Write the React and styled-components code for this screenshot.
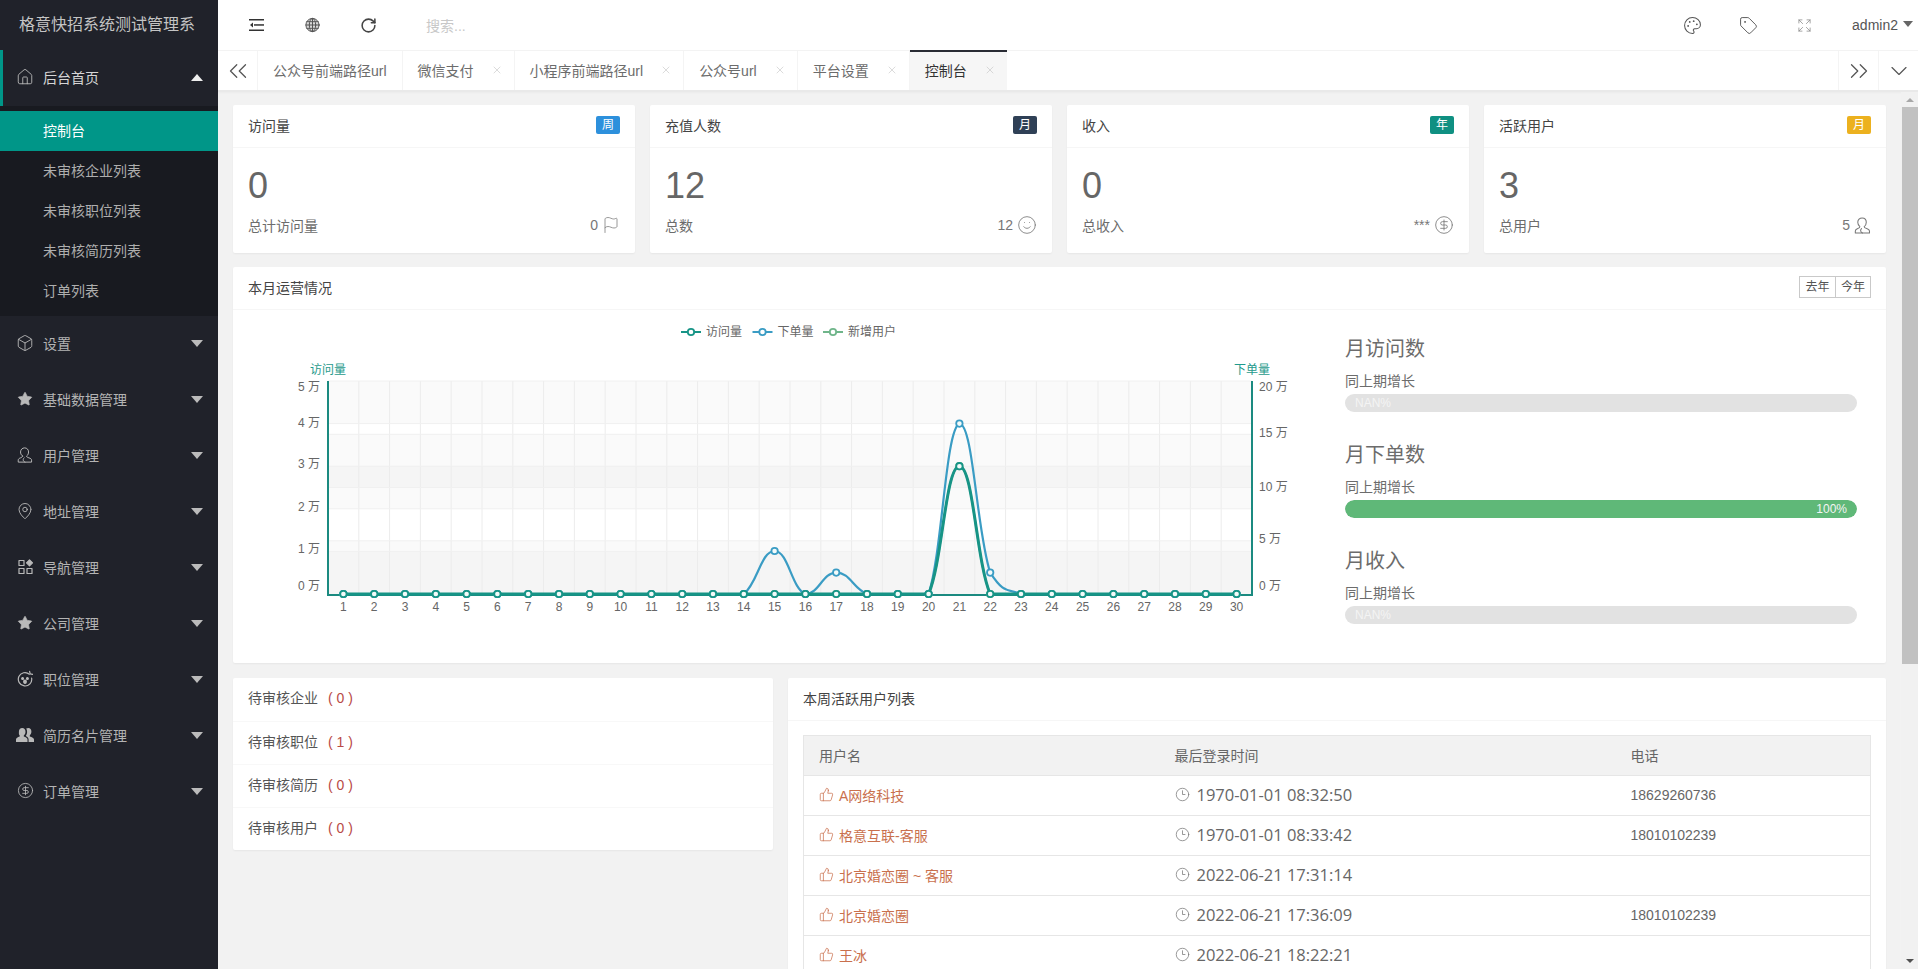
import React from 'react'
import styled, { createGlobalStyle } from 'styled-components'
import {
  Box, ChevronDown, ChevronsLeft, ChevronsRight, CircleDollarSign, Clock3, Expand, Flag, House,
  MapPin, Palette, RotateCw, Smile, Star, Tag, ThumbsUp, X,
} from 'lucide-react'

const GlobalStyle = createGlobalStyle`
  html, body { margin: 0; height: 100%; overflow: hidden; }
  body {
    font-family: "Liberation Sans", "Noto Sans CJK SC", sans-serif;
    font-size: 14px;
    color: #666;
    background: #f2f2f2;
  }
  * { box-sizing: border-box; }
`

const Page = styled.div`
  display: flex;
  height: 969px;
`

/* sidebar */
const Side = styled.aside`
  width: 218px;
  flex: none;
  background: #20222a;
  color: #bdbdbd;
`
const Logo = styled.div`
  height: 50px;
  line-height: 49px;
  padding-left: 19px;
  font-size: 16px;
  color: #c4c4c4;
  white-space: nowrap;
`
const NavItem = styled.div`
  position: relative;
  display: flex;
  align-items: center;
  height: 56px;
  padding: 0 0 3px 16px;
  color: ${p => (p.$open ? '#d6d6d6' : '#b4b4b4')};
  box-shadow: ${p => (p.$open ? 'inset 3px 0 0 #009688' : 'none')};
  svg { flex: none; }
`
const NavIcon = styled.span`
  display: flex;
  justify-content: center;
  width: 18px;
  margin-right: 9px;
  color: #b9b9b9;
`
const Caret = styled.i`
  position: absolute;
  right: 15px;
  top: 24px;
  width: 0;
  height: 0;
  border-left: 6px solid transparent;
  border-right: 6px solid transparent;
  border-top: ${p => (p.$up ? '0' : '7px solid #bbb')};
  border-bottom: ${p => (p.$up ? '7px solid #eee' : '0')};
`
const SubNav = styled.div`
  padding: 5px 0;
  background: #181a20;
`
const SubItem = styled.div`
  height: 40px;
  line-height: 40px;
  padding-left: 43px;
  color: ${p => (p.$active ? '#fff' : '#aeaeae')};
  background: ${p => (p.$active ? '#009688' : 'transparent')};
`

/* top bars */
const Main = styled.div`
  flex: 1;
  min-width: 0;
  display: flex;
  flex-direction: column;
`
const Header = styled.header`
  display: flex;
  align-items: center;
  height: 50px;
  flex: none;
  background: #fff;
  padding: 0 0 0 10px;
`
const ToolIcon = styled.span`
  display: flex;
  justify-content: center;
  width: 56px;
  color: ${p => p.$color || '#333'};
`
const Search = styled.span`
  margin-left: 30px;
  color: #c8c8c8;
`
const HeaderRight = styled.div`
  display: flex;
  align-items: center;
  margin-left: auto;
  padding-right: 5px;
`
const UserName = styled.span`
  margin-left: 20px;
  color: #555;
`
const UserCaret = styled.i`
  display: inline-block;
  margin-left: 5px;
  margin-bottom: 3px;
  width: 0;
  height: 0;
  border-left: 5px solid transparent;
  border-right: 5px solid transparent;
  border-top: 6px solid #666;
`
const TabBar = styled.nav`
  display: flex;
  height: 42px;
  flex: none;
  background: #fff;
  border-top: 1px solid #f3f3f3;
  border-bottom: 2px solid #e9e9e9;
  box-shadow: 0 1px 2px rgba(0, 0, 0, 0.03);
`
const TabArrow = styled.span`
  display: flex;
  align-items: center;
  justify-content: center;
  width: 40px;
  flex: none;
  color: #555;
  border-left: ${p => (p.$bordered ? '1px solid #f4f4f4' : '0')};
  border-right: ${p => (p.$left ? '1px solid #f4f4f4' : '0')};
`
const Tabs = styled.div`
  display: flex;
  flex: 1;
  min-width: 0;
`
const Tab = styled.div`
  position: relative;
  display: flex;
  align-items: center;
  padding: 0 ${p => (p.$noClose ? '15px' : '40px')} 2px 15px;
  color: ${p => (p.$active ? '#333' : '#6c6c6c')};
  background: ${p => (p.$active ? '#f6f6f6' : '#fff')};
  border-right: ${p => (p.$active ? '0' : '1px solid #f4f4f4')};
  white-space: nowrap;
  &::before {
    content: '';
    display: ${p => (p.$active ? 'block' : 'none')};
    position: absolute;
    left: 0;
    right: 0;
    top: -1px;
    height: 2px;
    background: #292b34;
  }
`
const TabClose = styled(X)`
  position: absolute;
  right: 11px;
  top: 13px;
  color: #c2c2c2;
`

/* content + its scrollbar */
const Workspace = styled.div`
  flex: 1;
  min-height: 0;
  display: flex;
`
const Scroller = styled.main`
  flex: 1;
  min-width: 0;
  overflow: hidden;
`
const ScrollRail = styled.div`
  width: 17px;
  flex: none;
  display: flex;
  flex-direction: column;
  padding-left: 1px;
  background: #f1f1f1;
`
const ScrollBtn = styled.div`
  height: ${p => p.$h}px;
  flex: none;
  display: flex;
  align-items: center;
  justify-content: center;
  &::after {
    content: '';
    width: 0;
    height: 0;
    border-left: 4px solid transparent;
    border-right: 4px solid transparent;
    border-top: ${p => (p.$down ? '4px solid #505050' : '0')};
    border-bottom: ${p => (p.$down ? '0' : '4px solid #a8a8a8')};
  }
`
const ScrollThumb = styled.div`
  height: 557px;
  flex: none;
  background: #c1c1c1;
`
const ScrollGap = styled.div`
  flex: 1;
`
const Content = styled.div`
  display: flex;
  flex-direction: column;
  gap: 14px;
  padding: 13px 15px 15px;
`
const StatGrid = styled.div`
  display: grid;
  grid-template-columns: repeat(4, 1fr);
  gap: 15px;
`
const Card = styled.section`
  background: #fff;
  border-radius: 2px;
  box-shadow: 0 1px 2px rgba(0, 0, 0, 0.05);
`
const CardHead = styled.div`
  display: flex;
  align-items: center;
  justify-content: space-between;
  height: 43px;
  padding: 0 15px 3px;
  color: #444;
  border-bottom: 1px solid #f6f6f6;
`
const Badge = styled.span`
  width: 24px;
  height: 18px;
  line-height: 18px;
  text-align: center;
  font-size: 12px;
  color: #fff;
  border-radius: 2px;
  background: ${p => p.$bg};
`
const StatBody = styled.div`
  padding: 11px 15px 0;
  height: 105px;
`
const BigNum = styled.p`
  margin: 0;
  height: 50px;
  line-height: 54px;
  font-size: 36px;
  color: #666;
`
const StatFoot = styled.div`
  display: flex;
  align-items: center;
  justify-content: space-between;
  margin-top: 6px;
  color: #6c6c6c;
`
const StatRight = styled.span`
  display: flex;
  align-items: center;
  gap: 4px;
  color: #777;
  svg { color: #777; }
`
const BtnGroup = styled.div`
  display: flex;
  border: 1px solid #c9c9c9;
  height: 22px;
`
const Btn = styled.span`
  width: 35px;
  line-height: 20px;
  text-align: center;
  font-size: 12px;
  color: #555;
  & + & { border-left: 1px solid #c9c9c9; }
`
const ChartBody = styled.div`
  display: flex;
  height: 353px;
`
const ChartWrap = styled.div`
  width: 1112px;
  flex: none;
  padding-top: 1px;
  svg { display: block; }
`
const Meters = styled.div`
  width: 512px;
  padding-top: 20px;
`
const Meter = styled.div`
  height: 106px;
`
const MeterTitle = styled.h3`
  margin: 0;
  height: 34px;
  line-height: 39px;
  font-size: 20px;
  font-weight: 400;
  color: #6c6c6c;
`
const MeterLabel = styled.div`
  height: 30px;
  line-height: 34px;
  color: #6c6c6c;
`
const Bar = styled.div`
  position: relative;
  height: 18px;
  border-radius: 20px;
  background: #e2e2e2;
  overflow: hidden;
`
const BarFill = styled.div`
  height: 100%;
  border-radius: 20px;
  background: #5fb878;
`
const BarText = styled.span`
  position: absolute;
  top: 0;
  line-height: 18px;
  font-size: 12px;
  color: #f4f4f4;
  left: ${p => (p.$right ? 'auto' : '10px')};
  right: ${p => (p.$right ? '10px' : 'auto')};
`
const BottomRow = styled.div`
  display: grid;
  grid-template-columns: 540px 1fr;
  gap: 15px;
  align-items: start;
  margin-top: 1px;
`
const TodoRow = styled.div`
  height: 43px;
  line-height: 41px;
  padding-left: 15px;
  color: #555;
  & + & { border-top: 1px solid #f8f8f8; }
`
const TodoCount = styled.span`
  margin-left: 10px;
  color: #b84a46;
`
const TableWrap = styled.div`
  padding: 14px 15px 15px;
`
const Table = styled.table`
  width: 100%;
  table-layout: fixed;
  border-collapse: collapse;
  color: #666;
  th, td {
    height: 40px;
    padding: 0 15px 2px;
    text-align: left;
    font-weight: 400;
    border: 1px solid #e6e6e6;
    border-left: 0;
    border-right: 0;
  }
  th { background: #f2f2f2; }
  tr > :first-child { border-left: 1px solid #e6e6e6; }
  tr > :last-child { border-right: 1px solid #e6e6e6; }
`
const UserLink = styled.span`
  display: flex;
  align-items: center;
  gap: 5px;
  color: #c9704d;
`
const LoginTime = styled.span`
  display: flex;
  align-items: center;
  gap: 7px;
  font-family: "Open Sans", sans-serif;
  font-size: 16.5px;
  color: #666;
  svg { color: #777; }
`

const stroke = { fill: 'none', stroke: 'currentColor', strokeLinecap: 'round', strokeLinejoin: 'round' }

const FoldIcon = () => (
  <svg width="15" height="12" viewBox="0 0 15 12" fill="#333">
    <rect x="0" y="0" width="15" height="1.5" />
    <rect x="5" y="5.2" width="10" height="1.5" />
    <rect x="0" y="10.5" width="15" height="1.5" />
    <path d="M4 3.5v5L1 6z" />
  </svg>
)

const GlobeIcon = () => (
  <svg width="15" height="16" viewBox="0 0 15 16" {...stroke} strokeWidth="1" color="#555">
    <circle cx="7.5" cy="8" r="6.6" fill="#d8d8d8" />
    <ellipse cx="7.5" cy="8" rx="3.2" ry="6.6" />
    <path d="M7.5 1.4v13.2M1.8 4.7h11.4M.9 8h13.2M1.8 11.3h11.4" />
  </svg>
)

const UserIcon = ({ size = 18 }) => (
  <svg width={size} height={size} viewBox="0 0 18 18" {...stroke} strokeWidth="1.1">
    <path d="M6.2 10.2C4.6 9 4 7.4 4 5.6 4 3 6 1 8.6 1s4.4 2 4.4 4.6c0 1.8-.7 3.5-2.2 4.6 0 1 .9 1.5 2.6 2 1.9.6 3 1.3 3 2.6V17H1.4v-2.2c0-1.3 1-2 2.6-2.6 1.4-.5 2.2-1 2.2-2z" />
    <path d="M9 17c-1.4-.6-2-1.5-2-2.6 0-.9.3-1.6 1-2.2" />
  </svg>
)

const AppsIcon = () => (
  <svg width="15" height="16" viewBox="0 0 15 16" {...stroke} strokeWidth="1.2">
    <rect x="1" y="1.5" width="5" height="5" />
    <rect x="1" y="9.5" width="5" height="5" />
    <rect x="9" y="9.5" width="5" height="5" />
    <path d="M11.5.8l3 3-3 3-3-3z" fill="currentColor" />
  </svg>
)

const FaceIcon = () => (
  <svg width="16" height="17" viewBox="0 0 16 17" {...stroke} strokeWidth="1.2">
    <path d="M12.4 4.2A6.7 6.7 0 1 0 14.6 8" />
    <path d="M12.6 1.3l.6 2.6 2.4.4" />
    <circle cx="5.6" cy="8.5" r=".9" fill="currentColor" />
    <circle cx="10.4" cy="8.5" r=".9" fill="currentColor" />
    <ellipse cx="8" cy="11.8" rx="1.3" ry="1.7" fill="currentColor" />
  </svg>
)

const PeopleIcon = () => (
  <svg width="18" height="14" viewBox="0 0 18 14" fill="currentColor">
    <path d="M6.2 0c2 0 3.3 1.6 3.3 3.7 0 1.6-.7 3-1.7 3.8v1.1c2 .7 3.7 1.6 3.7 3V14H0v-2.4c0-1.4 1.7-2.3 3.7-3V7.5C2.7 6.7 2.9 5.3 2.9 3.7 2.9 1.6 4.2 0 6.2 0z" />
    <path d="M12.4 0c1.8 0 3 1.5 3 3.5 0 1.6-.6 3-1.6 3.8v1.2c2.2.7 4.2 1.7 4.2 3.1V14h-5.4v-2.6c0-1.5-1-2.5-2.8-3.5.8-1 1.300-2.500 1.300-4.200 0-1.300-.3-2.400-.9-3.200.6-.3 1.400-.5 2.200-.5z" />
  </svg>
)

const navItems = [
  { label: '设置', icon: <Box size={18} strokeWidth={1.2} /> },
  { label: '基础数据管理', icon: <Star size={16} fill="currentColor" strokeWidth={1} /> },
  { label: '用户管理', icon: <UserIcon size={16} /> },
  { label: '地址管理', icon: <MapPin size={18} strokeWidth={1.2} /> },
  { label: '导航管理', icon: <AppsIcon /> },
  { label: '公司管理', icon: <Star size={16} fill="currentColor" strokeWidth={1} /> },
  { label: '职位管理', icon: <FaceIcon /> },
  { label: '简历名片管理', icon: <PeopleIcon /> },
  { label: '订单管理', icon: <CircleDollarSign size={17} strokeWidth={1.2} /> },
]

const stats = [
  { title: '访问量', tag: '周', bg: '#2d90dc', num: '0', foot: '总计访问量', value: '0', icon: <Flag size={18} strokeWidth={1} /> },
  { title: '充值人数', tag: '月', bg: '#2f4056', num: '12', foot: '总数', value: '12', icon: <Smile size={20} strokeWidth={1} /> },
  { title: '收入', tag: '年', bg: '#0f9082', num: '0', foot: '总收入', value: '***', icon: <CircleDollarSign size={20} strokeWidth={1} /> },
  { title: '活跃用户', tag: '月', bg: '#ecb11f', num: '3', foot: '总用户', value: '5', icon: <UserIcon size={17} /> },
]

const users = [
  { name: 'A网络科技', time: '1970-01-01 08:32:50', phone: '18629260736' },
  { name: '格意互联-客服', time: '1970-01-01 08:33:42', phone: '18010102239' },
  { name: '北京婚恋圈 ~ 客服', time: '2022-06-21 17:31:14', phone: '' },
  { name: '北京婚恋圈', time: '2022-06-21 17:36:09', phone: '18010102239' },
  { name: '王冰', time: '2022-06-21 18:22:21', phone: '' },
]

// chart geometry, in the svg's own coordinates
const L = 95
const R = 1019
const T = 70
const B = 283
const step = (R - L) / 30
const xAt = i => L + step * (i + 0.5)
const days = Array.from({ length: 30 }, (_, i) => i)
const visits = days.map(i => (i === 20 ? 127.8 : 0))
const orders = days.map(i => ({ 14: 43, 16: 21.4, 20: 170.4, 21: 21.4 }[i] || 0))

const smooth = vals => {
  let d = `M${xAt(0)} ${B - vals[0]}`
  for (let i = 0; i < vals.length - 1; i++) {
    const p0 = vals[Math.max(i - 1, 0)]
    const p1 = vals[i]
    const p2 = vals[i + 1]
    const p3 = vals[Math.min(i + 2, vals.length - 1)]
    const lo = Math.min(p1, p2)
    const hi = Math.max(p1, p2)
    const c1 = Math.min(hi, Math.max(lo, p1 + (p2 - p0) * 0.25))
    const c2 = Math.min(hi, Math.max(lo, p2 - (p3 - p1) * 0.25))
    d += `C${xAt(i) + step * 0.45} ${B - c1} ${xAt(i + 1) - step * 0.45} ${B - c2} ${xAt(i + 1)} ${B - p2}`
  }
  return d
}

const leftBands = [0, 2, 4].map(k => ({ y: B - 42.6 * (k + 1), h: 42.6 }))
const rightBands = [0, 2].map(k => ({ y: B - 53.25 * (k + 1), h: 53.25 }))
const leftTicks = [['5 万', 76], ['4 万', 112], ['3 万', 153], ['2 万', 196], ['1 万', 238], ['0 万', 275]]
const rightTicks = [['20 万', 76], ['15 万', 122], ['10 万', 176], ['5 万', 228], ['0 万', 275]]
const TEAL = '#179486'
const BLUE = '#3a9cc4'
const GREEN = '#6fb58a'

const Series = ({ vals, color, width = 2 }) => (
  <g>
    <path d={smooth(vals)} fill="none" stroke={color} strokeWidth={width} />
    {vals.map((v, i) => (
      <circle key={i} cx={xAt(i)} cy={B - v} r="3.2" fill="#f4fbfa" stroke={color} strokeWidth="1.8" />
    ))}
  </g>
)

const Legend = ({ x, color, label }) => (
  <g>
    <line x1={x} x2={x + 20} y1="21" y2="21" stroke={color} strokeWidth="2" />
    <circle cx={x + 10} cy="21" r="3.2" fill="#fff" stroke={color} strokeWidth="1.8" />
    <text x={x + 25} y="25" fontSize="12" fill="#666">{label}</text>
  </g>
)

const Chart = () => (
  <svg width="1112" height="352" viewBox="0 0 1112 352" fontFamily='"Liberation Sans", "Noto Sans CJK SC", sans-serif'>
    <Legend x={448} color={TEAL} label="访问量" />
    <Legend x={519.5} color={BLUE} label="下单量" />
    <Legend x={590} color={GREEN} label="新增用户" />
    <text x={L} y="63" fontSize="12" fill="#1f9a8c" textAnchor="middle">访问量</text>
    <text x={R} y="63" fontSize="12" fill="#1f9a8c" textAnchor="middle">下单量</text>
    {leftBands.map(b => <rect key={b.y} x={L} y={b.y} width={R - L} height={b.h} fill="rgba(200,200,200,0.09)" />)}
    {rightBands.map(b => <rect key={b.y} x={L} y={b.y} width={R - L} height={b.h} fill="rgba(200,200,200,0.09)" />)}
    {days.map(i => <line key={i} x1={L + step * (i + 1)} x2={L + step * (i + 1)} y1={T} y2={B} stroke="#ececec" />)}
    {[0, 1, 2, 3, 4].map(k => <line key={k} x1={L} x2={R} y1={B - 42.6 * (k + 1)} y2={B - 42.6 * (k + 1)} stroke="#f0f0f0" />)}
    {[1, 2, 3].map(k => <line key={k} x1={L} x2={R} y1={B - 53.25 * k} y2={B - 53.25 * k} stroke="#f0f0f0" />)}
    {leftTicks.map(([t, y]) => <text key={t} x={L - 8} y={y + 4} fontSize="12" fill="#666" textAnchor="end">{t}</text>)}
    {rightTicks.map(([t, y]) => <text key={t} x={R + 7} y={y + 4} fontSize="12" fill="#666">{t}</text>)}
    <path d={`M${L} ${T}V${B + 1}H${R}V${T}`} fill="none" stroke="#1b8a80" strokeWidth="2" />
    <Series vals={visits} color={GREEN} />
    <Series vals={orders} color={BLUE} width={2.2} />
    <Series vals={visits} color={TEAL} width={3} />
    {days.map(i => <text key={i} x={xAt(i)} y={B + 17} fontSize="12" fill="#666" textAnchor="middle">{i + 1}</text>)}
  </svg>
)

export default function App() {
  return (
    <Page>
      <GlobalStyle />
      <Side>
        <Logo>格意快招系统测试管理系</Logo>
        <NavItem $open>
          <NavIcon><House size={18} strokeWidth={1.2} /></NavIcon>
          后台首页
          <Caret $up />
        </NavItem>
        <SubNav>
          <SubItem $active>控制台</SubItem>
          <SubItem>未审核企业列表</SubItem>
          <SubItem>未审核职位列表</SubItem>
          <SubItem>未审核简历列表</SubItem>
          <SubItem>订单列表</SubItem>
        </SubNav>
        {navItems.map(n => (
          <NavItem key={n.label}>
            <NavIcon>{n.icon}</NavIcon>
            {n.label}
            <Caret />
          </NavItem>
        ))}
      </Side>

      <Main>
        <Header>
          <ToolIcon><FoldIcon /></ToolIcon>
          <ToolIcon><GlobeIcon /></ToolIcon>
          <ToolIcon $color="#444"><RotateCw size={17} strokeWidth={2.2} /></ToolIcon>
          <Search>搜索...</Search>
          <HeaderRight>
            <ToolIcon $color="#555"><Palette size={19} strokeWidth={1.3} /></ToolIcon>
            <ToolIcon $color="#555"><Tag size={19} strokeWidth={1.2} /></ToolIcon>
            <ToolIcon $color="#888"><Expand size={15} strokeWidth={1.2} /></ToolIcon>
            <UserName>admin2</UserName>
            <UserCaret />
          </HeaderRight>
        </Header>
        <TabBar>
          <TabArrow $left><ChevronsLeft size={30} strokeWidth={1} /></TabArrow>
          <Tabs>
            <Tab $noClose>公众号前端路径url</Tab>
            <Tab>微信支付<TabClose size={12} strokeWidth={1.2} /></Tab>
            <Tab>小程序前端路径url<TabClose size={12} strokeWidth={1.2} /></Tab>
            <Tab>公众号url<TabClose size={12} strokeWidth={1.2} /></Tab>
            <Tab>平台设置<TabClose size={12} strokeWidth={1.2} /></Tab>
            <Tab $active>控制台<TabClose size={12} strokeWidth={1.2} /></Tab>
          </Tabs>
          <TabArrow $bordered><ChevronsRight size={30} strokeWidth={1} /></TabArrow>
          <TabArrow $bordered><ChevronDown size={28} strokeWidth={1} /></TabArrow>
        </TabBar>

        <Workspace>
          <Scroller>
            <Content>
              <StatGrid>
                {stats.map(s => (
                  <Card key={s.title}>
                    <CardHead>{s.title}<Badge $bg={s.bg}>{s.tag}</Badge></CardHead>
                    <StatBody>
                      <BigNum>{s.num}</BigNum>
                      <StatFoot>{s.foot}<StatRight>{s.value}{s.icon}</StatRight></StatFoot>
                    </StatBody>
                  </Card>
                ))}
              </StatGrid>

              <Card>
                <CardHead>
                  本月运营情况
                  <BtnGroup><Btn>去年</Btn><Btn>今年</Btn></BtnGroup>
                </CardHead>
                <ChartBody>
                  <ChartWrap><Chart /></ChartWrap>
                  <Meters>
                    <Meter>
                      <MeterTitle>月访问数</MeterTitle>
                      <MeterLabel>同上期增长</MeterLabel>
                      <Bar><BarText>NAN%</BarText></Bar>
                    </Meter>
                    <Meter>
                      <MeterTitle>月下单数</MeterTitle>
                      <MeterLabel>同上期增长</MeterLabel>
                      <Bar><BarFill /><BarText $right>100%</BarText></Bar>
                    </Meter>
                    <Meter>
                      <MeterTitle>月收入</MeterTitle>
                      <MeterLabel>同上期增长</MeterLabel>
                      <Bar><BarText>NAN%</BarText></Bar>
                    </Meter>
                  </Meters>
                </ChartBody>
              </Card>

              <BottomRow>
                <Card>
                  <TodoRow>待审核企业<TodoCount>( 0 )</TodoCount></TodoRow>
                  <TodoRow>待审核职位<TodoCount>( 1 )</TodoCount></TodoRow>
                  <TodoRow>待审核简历<TodoCount>( 0 )</TodoCount></TodoRow>
                  <TodoRow>待审核用户<TodoCount>( 0 )</TodoCount></TodoRow>
                </Card>
                <Card>
                  <CardHead>本周活跃用户列表</CardHead>
                  <TableWrap>
                    <Table>
                      <colgroup>
                        <col width="356" />
                        <col width="456" />
                        <col />
                      </colgroup>
                      <thead>
                        <tr><th>用户名</th><th>最后登录时间</th><th>电话</th></tr>
                      </thead>
                      <tbody>
                        {users.map(u => (
                          <tr key={u.time}>
                            <td><UserLink><ThumbsUp size={15} strokeWidth={1.2} />{u.name}</UserLink></td>
                            <td><LoginTime><Clock3 size={15} strokeWidth={1.2} />{u.time}</LoginTime></td>
                            <td>{u.phone}</td>
                          </tr>
                        ))}
                      </tbody>
                    </Table>
                  </TableWrap>
                </Card>
              </BottomRow>
            </Content>
          </Scroller>
          <ScrollRail>
            <ScrollBtn $h={15} />
            <ScrollThumb />
            <ScrollGap />
            <ScrollBtn $h={17} $down />
          </ScrollRail>
        </Workspace>
      </Main>
    </Page>
  )
}
